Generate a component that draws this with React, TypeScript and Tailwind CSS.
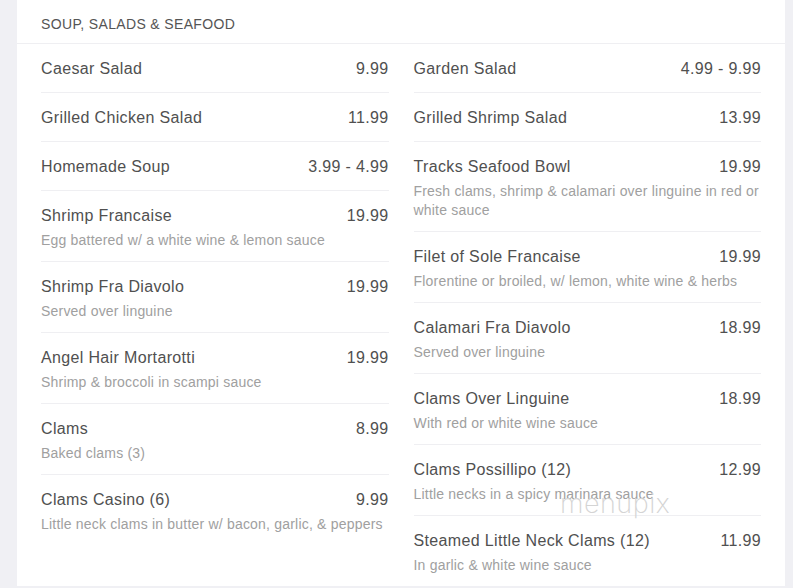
type Item = {
	name: string
	price: string
	desc?: string
}

const leftItems: Item[] = [
	{ name: "Caesar Salad", price: "9.99" },
	{ name: "Grilled Chicken Salad", price: "11.99" },
	{ name: "Homemade Soup", price: "3.99 - 4.99" },
	{ name: "Shrimp Francaise", price: "19.99", desc: "Egg battered w/ a white wine & lemon sauce" },
	{ name: "Shrimp Fra Diavolo", price: "19.99", desc: "Served over linguine" },
	{ name: "Angel Hair Mortarotti", price: "19.99", desc: "Shrimp & broccoli in scampi sauce" },
	{ name: "Clams", price: "8.99", desc: "Baked clams (3)" },
	{ name: "Clams Casino (6)", price: "9.99", desc: "Little neck clams in butter w/ bacon, garlic, & peppers" },
]

const rightItems: Item[] = [
	{ name: "Garden Salad", price: "4.99 - 9.99" },
	{ name: "Grilled Shrimp Salad", price: "13.99" },
	{ name: "Tracks Seafood Bowl", price: "19.99", desc: "Fresh clams, shrimp & calamari over linguine in red or white sauce" },
	{ name: "Filet of Sole Francaise", price: "19.99", desc: "Florentine or broiled, w/ lemon, white wine & herbs" },
	{ name: "Calamari Fra Diavolo", price: "18.99", desc: "Served over linguine" },
	{ name: "Clams Over Linguine", price: "18.99", desc: "With red or white wine sauce" },
	{ name: "Clams Possillipo (12)", price: "12.99", desc: "Little necks in a spicy marinara sauce" },
	{ name: "Steamed Little Neck Clams (12)", price: "11.99", desc: "In garlic & white wine sauce" },
]

const MenuRow = ({ item }: { item: Item }) => (
	<div className="pt-[13px] pb-[11px] border-b border-[#efeff2] last:border-b-0">
		<div className="flex justify-between items-start text-base leading-6 tracking-[0.35px] text-[#505050]">
			<span>{item.name}</span>
			<span className="shrink-0 ml-4">{item.price}</span>
		</div>
		{item.desc && (
			<p className="mt-[3px] text-sm leading-[19px] tracking-[0.2px] text-[#a0a0a0]">{item.desc}</p>
		)}
	</div>
)

const App = () => {
	return (
		<main className="min-h-[588px] bg-[#f0f0f4] font-['Liberation_Sans',Arial,sans-serif]">
			<section className="relative ml-[17px] w-[768px] bg-white">
				{/* HEADER */}
				<h2 className="px-6 pt-[14px] pb-[9px] text-sm leading-5 tracking-[0.35px] uppercase text-[#555] border-b border-[#efeff2]">
					Soup, Salads &amp; Seafood
				</h2>

				{/* ITEMS */}
				<div className="grid grid-cols-2 gap-x-[25px] px-6">
					<div className="flex flex-col">
						{leftItems.map((item) => (
							<MenuRow key={item.name} item={item} />
						))}
					</div>
					<div className="flex flex-col">
						{rightItems.map((item) => (
							<MenuRow key={item.name} item={item} />
						))}
					</div>
				</div>

				<span className="absolute left-[543px] top-[490px] text-[27px] leading-none font-['Inter',sans-serif] font-extralight text-[#d4d4d4] tracking-[0.5px] pointer-events-none">
					menupix
				</span>
			</section>
		</main>
	)
}
export default App
